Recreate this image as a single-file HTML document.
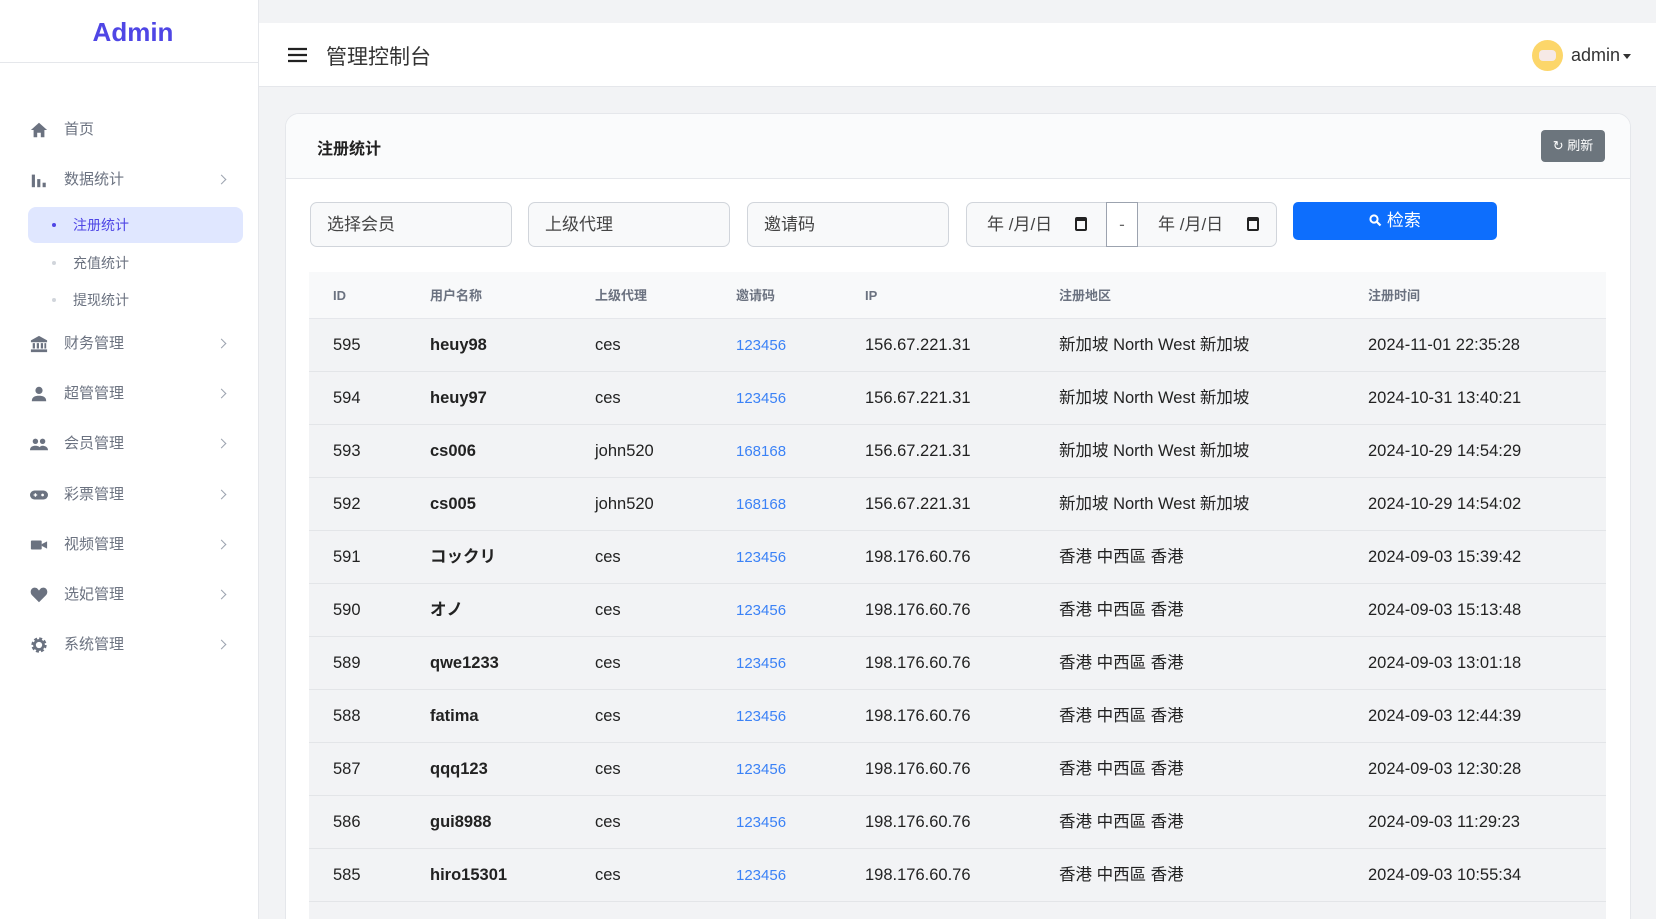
<!DOCTYPE html><html><head><meta charset="utf-8"><style>
*{box-sizing:border-box;margin:0;padding:0}
html,body{width:1656px;height:919px;overflow:hidden}
body{background:#f2f3f5;font-family:"Liberation Sans","Noto Sans CJK SC",sans-serif}
#w{position:relative;width:1656px;height:919px;overflow:hidden}
.sb{position:absolute;left:0;top:0;width:259px;height:919px;background:#fff;border-right:1px solid #e5e7eb;z-index:2}
.logo{height:63px;border-bottom:1px solid #e5e7eb;text-align:center;font-size:26px;font-weight:bold;color:#4f46e5;line-height:64px;padding-left:8px}
.it{position:absolute;left:0;width:259px;height:36px;line-height:36px;font-size:15px;color:#6b7280}
.it .ic{position:absolute;left:30px;top:9px;width:18px;height:18px}
.it .t{position:absolute;left:64px}
.it .ch{position:absolute;left:218px;top:14px;width:7px;height:7px;border-top:1.5px solid #9ca3af;border-right:1.5px solid #9ca3af;transform:rotate(45deg)}
.sub{position:absolute;left:28px;width:215px;height:36px;line-height:36px;font-size:14px;color:#6b7280;border-radius:8px}
.sub .d{position:absolute;left:24px;top:16px;width:4px;height:4px;border-radius:50%;background:#d1d5db}
.sub .t{position:absolute;left:45px}
.hd{position:absolute;left:259px;top:23px;right:0;height:64px;background:#fff;border-bottom:1px solid #e5e7eb}
.card{position:absolute;left:285px;top:113px;width:1346px;height:840px;background:#fff;border:1px solid #e5e7eb;border-radius:14px;overflow:hidden}
.ch1{height:65px;background:#fafbfc;border-bottom:1px solid #e5e7eb;position:relative}
.inp{position:absolute;top:202px;height:45px;border:1px solid #d1d5db;border-radius:7px;background:#f8f9fa;font-size:17px;color:#444;line-height:43px;padding-left:16px}
.tbl{position:absolute;left:309px;top:272px;width:1297px}
.th{height:47px;background:#f8f9fa;border-bottom:1px solid #e5e7eb;position:relative;font-size:13px;font-weight:bold;color:#6b7280}
.tr{height:53px;background:#f2f3f5;border-bottom:1px solid #e3e5e8;position:relative;font-size:16.5px;color:#222}
.th span,.tr span{position:absolute;top:0}
.th span{line-height:47px}.tr span{line-height:53px}
.c1{left:24px}.c2{left:121px}.c3{left:286px}.c4{left:427px}.c5{left:556px}.c6{left:750px}.c7{left:1059px}
.tr .c2{font-weight:bold}.tr .c4{color:#3b82f6;font-size:15px}
</style></head><body><div id="w">
<div class="sb">
<div class="logo">Admin</div>
<div class="it" style="top:112px"><svg class="ic" viewBox="0 0 20 20"><path d="M10 2L1 10h3v8h4v-5h4v5h4v-8h3z" fill="#6b7280"/></svg><span class="t">首页</span></div>
<div class="it" style="top:162px"><svg class="ic" viewBox="0 0 20 20"><rect x="2" y="4" width="3.5" height="14" fill="#6b7280"/><rect x="8" y="9" width="3.5" height="9" fill="#6b7280"/><rect x="14" y="13" width="3.5" height="5" fill="#6b7280"/></svg><span class="t">数据统计</span><span class="ch"></span></div>
<div class="sub" style="top:207px;background:#e0e7ff;color:#4f46e5"><span class="d" style="background:#4f46e5"></span><span class="t">注册统计</span></div>
<div class="sub" style="top:245px"><span class="d"></span><span class="t">充值统计</span></div>
<div class="sub" style="top:282px"><span class="d"></span><span class="t">提现统计</span></div>
<div class="it" style="top:326px"><svg class="ic" viewBox="0 0 20 20"><path d="M10 1L1 6v2h18V6zM3 9h2.5v6H3zm4.5 0H10v6H7.5zm4.5 0h2.5v6H12zm4 0h2v6h-2zM1 16h18v3H1z" fill="#6b7280"/></svg><span class="t">财务管理</span><span class="ch"></span></div>
<div class="it" style="top:376px"><svg class="ic" viewBox="0 0 20 20"><circle cx="10" cy="6" r="4" fill="#6b7280"/><path d="M2 18c0-5 4-6 8-6s8 1 8 6z" fill="#6b7280"/></svg><span class="t">超管管理</span><span class="ch"></span></div>
<div class="it" style="top:426px"><svg class="ic" viewBox="0 0 20 20"><circle cx="6" cy="7" r="3" fill="#6b7280"/><circle cx="14" cy="7" r="3" fill="#6b7280"/><path d="M0 17c0-4 3-5 6-5s6 1 6 5zM10 17c0-4 2-5 4-5s6 1 6 5z" fill="#6b7280"/></svg><span class="t">会员管理</span><span class="ch"></span></div>
<div class="it" style="top:477px"><svg class="ic" viewBox="0 0 20 20"><rect x="0" y="5" width="20" height="10" rx="5" fill="#6b7280"/><path d="M4 10h4M6 8v4" stroke="#fff" stroke-width="1.5"/><circle cx="14" cy="10" r="1.5" fill="#fff"/></svg><span class="t">彩票管理</span><span class="ch"></span></div>
<div class="it" style="top:527px"><svg class="ic" viewBox="0 0 20 20"><rect x="1" y="5" width="12" height="10" rx="1" fill="#6b7280"/><path d="M13 9l6-3v8l-6-3z" fill="#6b7280"/></svg><span class="t">视频管理</span><span class="ch"></span></div>
<div class="it" style="top:577px"><svg class="ic" viewBox="0 0 20 20"><path d="M10 18L2 10C-1 6 2 1 6 2c2 0 3 2 4 3 1-1 2-3 4-3 4-1 7 4 4 8z" fill="#6b7280"/></svg><span class="t">选妃管理</span><span class="ch"></span></div>
<div class="it" style="top:627px"><svg class="ic" viewBox="0 0 20 20"><circle cx="10" cy="10" r="6.5" fill="none" stroke="#6b7280" stroke-width="4" stroke-dasharray="3 2.1"/><circle cx="10" cy="10" r="5" fill="none" stroke="#6b7280" stroke-width="3"/></svg><span class="t">系统管理</span><span class="ch"></span></div>
</div>
<div class="hd">
<svg style="position:absolute;left:29px;top:24px" width="19" height="16" viewBox="0 0 19 16"><path d="M0 2h19M0 8h19M0 14h19" stroke="#222" stroke-width="2.2"/></svg>
<span style="position:absolute;left:67px;top:18px;font-size:21px;color:#333">管理控制台</span>
<div style="position:absolute;left:1273px;top:17px;width:31px;height:31px;border-radius:50%;background:#fcd66a"><div style="position:absolute;left:7px;top:10px;width:17px;height:11px;border-radius:4px;background:#f6e9e6"></div></div>
<span style="position:absolute;left:1312px;top:22px;font-size:18px;color:#333">admin</span>
<span style="position:absolute;left:1364px;top:31px;border:4px solid transparent;border-top:5px solid #333"></span>
</div>
<div class="card"><div class="ch1">
<span style="position:absolute;left:31px;top:21px;font-size:16px;font-weight:bold;color:#222">注册统计</span>
<div style="position:absolute;left:1255px;top:16px;width:64px;height:32px;background:#6c757d;border-radius:4px;color:#fff;font-size:13px;line-height:32px;text-align:center">↻ 刷新</div>
</div></div>
<div class="inp" style="left:310px;width:202px">选择会员</div>
<div class="inp" style="left:528px;width:202px">上级代理</div>
<div class="inp" style="left:747px;width:202px">邀请码</div>
<div class="inp" style="left:966px;width:311px;padding-left:20px">年 /月/日 <span style="position:absolute;left:108px;top:14px;width:12px;height:14px;border:2px solid #222;border-top-width:4px;border-radius:2px"></span><span style="position:absolute;left:139px;top:-1px;width:32px;height:45px;background:#fff;border:1px solid #9ca3af;text-align:center;color:#666">-</span><span style="position:absolute;left:191px">年 /月/日</span><span style="position:absolute;left:280px;top:14px;width:12px;height:14px;border:2px solid #222;border-top-width:4px;border-radius:2px"></span></div>
<div style="position:absolute;left:1293px;top:202px;width:204px;height:38px;background:#0d6efd;border-radius:5px;color:#fff;font-size:17px;line-height:38px;text-align:center"><svg width="13" height="13" viewBox="0 0 13 13" style="vertical-align:-1px"><circle cx="5" cy="5" r="3.6" fill="none" stroke="#fff" stroke-width="2"/><path d="M7.5 7.5l4 4" stroke="#fff" stroke-width="2.2"/></svg> 检索</div>
<div class="tbl">
<div class="th"><span class="c1">ID</span><span class="c2">用户名称</span><span class="c3">上级代理</span><span class="c4">邀请码</span><span class="c5">IP</span><span class="c6">注册地区</span><span class="c7">注册时间</span></div>
<div class="tr"><span class="c1">595</span><span class="c2">heuy98</span><span class="c3">ces</span><span class="c4">123456</span><span class="c5">156.67.221.31</span><span class="c6">新加坡 North West 新加坡</span><span class="c7">2024-11-01 22:35:28</span></div>
<div class="tr"><span class="c1">594</span><span class="c2">heuy97</span><span class="c3">ces</span><span class="c4">123456</span><span class="c5">156.67.221.31</span><span class="c6">新加坡 North West 新加坡</span><span class="c7">2024-10-31 13:40:21</span></div>
<div class="tr"><span class="c1">593</span><span class="c2">cs006</span><span class="c3">john520</span><span class="c4">168168</span><span class="c5">156.67.221.31</span><span class="c6">新加坡 North West 新加坡</span><span class="c7">2024-10-29 14:54:29</span></div>
<div class="tr"><span class="c1">592</span><span class="c2">cs005</span><span class="c3">john520</span><span class="c4">168168</span><span class="c5">156.67.221.31</span><span class="c6">新加坡 North West 新加坡</span><span class="c7">2024-10-29 14:54:02</span></div>
<div class="tr"><span class="c1">591</span><span class="c2">コックリ</span><span class="c3">ces</span><span class="c4">123456</span><span class="c5">198.176.60.76</span><span class="c6">香港 中西區 香港</span><span class="c7">2024-09-03 15:39:42</span></div>
<div class="tr"><span class="c1">590</span><span class="c2">オノ</span><span class="c3">ces</span><span class="c4">123456</span><span class="c5">198.176.60.76</span><span class="c6">香港 中西區 香港</span><span class="c7">2024-09-03 15:13:48</span></div>
<div class="tr"><span class="c1">589</span><span class="c2">qwe1233</span><span class="c3">ces</span><span class="c4">123456</span><span class="c5">198.176.60.76</span><span class="c6">香港 中西區 香港</span><span class="c7">2024-09-03 13:01:18</span></div>
<div class="tr"><span class="c1">588</span><span class="c2">fatima</span><span class="c3">ces</span><span class="c4">123456</span><span class="c5">198.176.60.76</span><span class="c6">香港 中西區 香港</span><span class="c7">2024-09-03 12:44:39</span></div>
<div class="tr"><span class="c1">587</span><span class="c2">qqq123</span><span class="c3">ces</span><span class="c4">123456</span><span class="c5">198.176.60.76</span><span class="c6">香港 中西區 香港</span><span class="c7">2024-09-03 12:30:28</span></div>
<div class="tr"><span class="c1">586</span><span class="c2">gui8988</span><span class="c3">ces</span><span class="c4">123456</span><span class="c5">198.176.60.76</span><span class="c6">香港 中西區 香港</span><span class="c7">2024-09-03 11:29:23</span></div>
<div class="tr"><span class="c1">585</span><span class="c2">hiro15301</span><span class="c3">ces</span><span class="c4">123456</span><span class="c5">198.176.60.76</span><span class="c6">香港 中西區 香港</span><span class="c7">2024-09-03 10:55:34</span></div>
<div class="tr"></div>
</div>
</div></body></html>
